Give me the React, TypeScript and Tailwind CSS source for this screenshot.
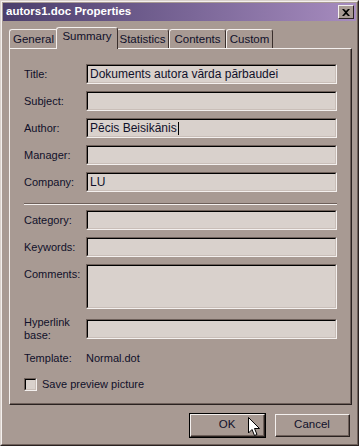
import React from "react";

const font = { fontFamily: '"Liberation Sans", Arial, sans-serif' };

function Field({ value, h = "h-[20px]", caret }: { value?: string; h?: string; caret?: boolean }) {
  return (
    <div className={`flex-1 ${h} border-t border-l border-t-[#6e605a] border-l-[#6e605a] border-b border-r border-b-[#f4f0ee] border-r-[#f4f0ee]`}>
      <div className="h-full border-t border-l border-t-black border-l-black border-b border-r border-b-[#c9beb8] border-r-[#c9beb8] bg-[#d9d1cc] pl-[2px] flex items-start pt-[2px] text-[12px] text-[#10102a] leading-[13px]">
        {value}
        {caret && <span className="inline-block w-px h-[13px] bg-black ml-px" />}
      </div>
    </div>
  );
}

function Row({ label, value, caret }: { label: string; value?: string; caret?: boolean }) {
  return (
    <div className="flex items-center">
      <div className="w-[62px] text-[11px] leading-[16px] text-[#10102a]">{label}</div>
      <Field value={value} caret={caret} />
    </div>
  );
}

function Tab({ label, active, w }: { label: string; active?: boolean; w: string }) {
  return (
    <div
      className={`${w} relative flex items-center justify-center text-[11.5px] text-[#10102a] border-l border-t border-l-[#f4f0ee] border-t-[#f4f0ee] border-r border-r-[#3a2f2c] rounded-t-[3px] bg-[#a89a93] ${
        active ? "h-[22px] -mb-px z-10 -mx-[2px] pb-[3px]" : "h-[19px] pt-[1px]"
      }`}
    >
      {label}
    </div>
  );
}

function Btn({ label }: { label: string }) {
  return (
    <div className="w-[75px] h-[23px] border border-[#f4f0ee] border-r-[#2a2220] border-b-[#2a2220] bg-[#a89a93]">
      <div className="h-full border-r border-b border-r-[#6e605a] border-b-[#6e605a] flex items-center justify-center text-[11.5px] text-[#10102a]">
        {label}
      </div>
    </div>
  );
}

export default function App() {
  return (
    <div style={font} className="w-[359px] h-[446px] bg-[#a89a93] relative select-none">
      <div className="w-full h-full border-t border-l border-t-[#d9d1cc] border-l-[#d9d1cc] border-r border-b border-r-[#2a2220] border-b-[#2a2220]">
        <div className="w-full h-full border-t border-l border-t-[#f4f0ee] border-l-[#f4f0ee] border-r border-b border-r-[#6e605a] border-b-[#6e605a] p-px flex flex-col">
          {/* title bar */}
          <div className="h-[18px] flex items-center justify-between pl-[3px] pr-[2px] bg-gradient-to-r from-[#4b3e6c] to-[#a78cbf]">
            <span className="text-white font-bold text-[11.5px] leading-none">autors1.doc Properties</span>
            <div className="w-[16px] h-[14px] bg-[#a89a93] border border-[#f4f0ee] border-r-[#2a2220] border-b-[#2a2220] flex items-center justify-center">
              <svg width="8" height="7" viewBox="0 0 8 7">
                <path d="M0 0 L2 0 L4 2 L6 0 L8 0 L5 3.5 L8 7 L6 7 L4 5 L2 7 L0 7 L3 3.5 Z" fill="#000" />
              </svg>
            </div>
          </div>
          {/* tabs */}
          <div className="mt-[5px] ml-[6px] flex items-end h-[22px]">
            <Tab label="General" w="w-[49px]" />
            <Tab label="Summary" w="w-[62px]" active />
            <Tab label="Statistics" w="w-[53px]" />
            <Tab label="Contents" w="w-[57px]" />
            <Tab label="Custom" w="w-[47px]" />
          </div>
          {/* panel */}
          <div className="ml-[6px] w-[343px] h-[357px] border-l border-t border-l-[#f4f0ee] border-t-[#f4f0ee] border-r border-b border-r-[#2a2220] border-b-[#2a2220]">
            <div className="h-full border-r border-b border-r-[#6e605a] border-b-[#6e605a] pl-[14px] pr-[13px] pt-[15px] flex flex-col">
              <div className="flex flex-col gap-[7px]">
                <Row label="Title:" value="Dokuments autora vārda pārbaudei" />
                <Row label="Subject:" />
                <Row label="Author:" value="Pēcis Beisikānis" caret />
                <Row label="Manager:" />
                <Row label="Company:" value="LU" />
              </div>
              <div className="mt-[11px] h-[2px] border-t border-t-[#6e605a] border-b border-b-[#f4f0ee]" />
              <div className="mt-[5px] flex flex-col gap-[7px]">
                <Row label="Category:" />
                <Row label="Keywords:" />
                <div className="flex items-start">
                  <div className="w-[62px] text-[11px] leading-[16px] text-[#10102a] pt-[2px]">Comments:</div>
                  <Field h="h-[45px]" />
                </div>
                <div className="flex items-center">
                  <div className="w-[62px] text-[11px] leading-[13px] text-[#10102a]">Hyperlink<br />base:</div>
                  <Field />
                </div>
              </div>
              <div className="mt-[8px] flex text-[11px] leading-[16px] text-[#10102a]">
                <div className="w-[62px]">Template:</div>
                <div>Normal.dot</div>
              </div>
              <div className="mt-[10px] flex items-center gap-[5px] text-[11px] leading-[16px] text-[#10102a]">
                <div className="w-[13px] h-[13px] border-t border-l border-t-[#6e605a] border-l-[#6e605a] border-b border-r border-b-[#f4f0ee] border-r-[#f4f0ee]">
                  <div className="w-full h-full border-t border-l border-t-black border-l-black border-b border-r border-b-[#c9beb8] border-r-[#c9beb8] bg-[#d9d1cc]" />
                </div>
                <span>Save preview picture</span>
              </div>
            </div>
          </div>
          {/* buttons */}
          <div className="mt-[8px] flex justify-end gap-[9px] pr-[6px]">
            <div className="border border-black">
              <Btn label="OK" />
            </div>
            <div className="pt-px">
              <Btn label="Cancel" />
            </div>
          </div>
        </div>
      </div>
      {/* mouse pointer */}
      <svg className="absolute left-[248px] top-[417px]" width="12" height="20" viewBox="0 0 12 20">
        <path d="M0.5 0.5 L0.5 16 L4 12.5 L6.5 18.5 L9 17.5 L6.5 11.5 L11.5 11.5 Z" fill="#fff" stroke="#000" strokeWidth="1" />
      </svg>
    </div>
  );
}
